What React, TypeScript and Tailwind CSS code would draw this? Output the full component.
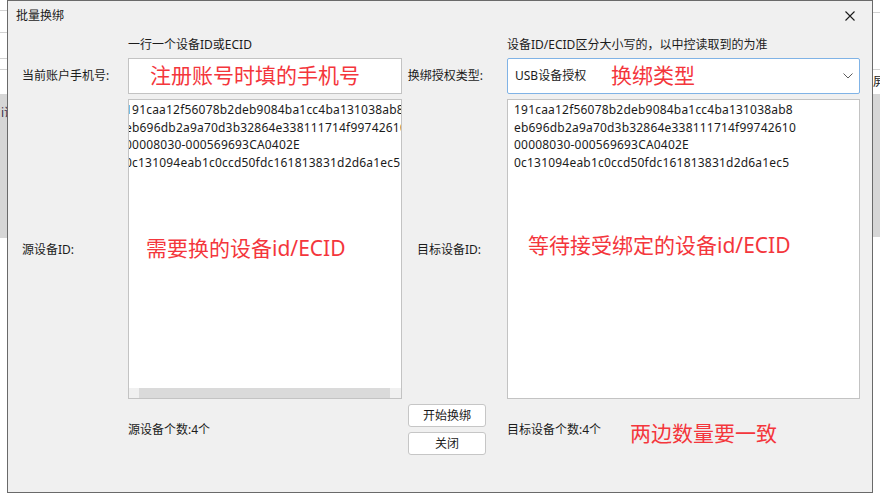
const ids = [
  '191caa12f56078b2deb9084ba1cc4ba131038ab8',
  'eb696db2a9a70d3b32864e338111714f99742610',
  '00008030-000569693CA0402E',
  '0c131094eab1c0ccd50fdc161813831d2d6a1ec5',
];

function IdLines() {
  return (
    <div className="whitespace-nowrap pt-[1px] leading-[17.5px] tracking-[0.2px]">
      {ids.map((id) => (
        <div key={id}>{id}</div>
      ))}
    </div>
  );
}

function LeftBackdrop() {
  return (
    <div className="flex w-[7px] shrink-0 flex-col overflow-hidden bg-white">
      <div className="h-[11px] shrink-0 border-b border-[#d2d2d2]" />
      <div className="h-[22px] shrink-0 border-b border-[#d2d2d2]" />
      <div className="h-[26px] shrink-0 border-b border-[#d2d2d2]" />
      <div className="h-[11px] shrink-0 border-b border-[#d2d2d2]" />
      <div className="h-[24px] shrink-0" />
      <div className="h-[144px] shrink-0 whitespace-nowrap bg-[#d6d6d6] pl-[1px] pt-[11px] leading-[16px] text-[#3a2f4a]">
        i讯
      </div>
    </div>
  );
}

function RightBackdrop() {
  return (
    <div className="flex w-[7px] shrink-0 flex-col overflow-hidden bg-white">
      <div className="h-[13px] shrink-0 border-b border-[#d2d2d2]" />
      <div className="h-[57px] shrink-0 border-b border-[#d2d2d2]" />
      <div className="flex h-[24px] shrink-0 items-center whitespace-nowrap">屏</div>
      <div className="h-[143px] shrink-0 bg-[#d6d6d6]" />
    </div>
  );
}

function Dialog() {
  return (
    <div className="flex h-[493px] w-[866px] shrink-0 flex-col border border-[#6a6a6a] bg-[#f0f0f0]">
      {/* title bar */}
      <div className="flex h-[30px] shrink-0 items-center justify-between pl-[8px] pr-[17px]">
        <span>批量换绑</span>
        <svg width="10" height="10" viewBox="0 0 10 10" className="text-[#1b1b1b]">
          <path d="M0.5 0.5 L9.5 9.5 M9.5 0.5 L0.5 9.5" stroke="currentColor" strokeWidth="1.1" fill="none" />
        </svg>
      </div>

      <div className="flex flex-col pl-[14px]">
        {/* hints */}
        <div className="flex h-[27px] items-center">
          <div className="w-[106px]" />
          <div className="w-[274px]">一行一个设备ID或ECID</div>
          <div className="w-[105px]" />
          <div className="w-[353px]">设备ID/ECID区分大小写的，以中控读取到的为准</div>
        </div>

        {/* phone + type */}
        <div className="flex h-[36px]">
          <div className="flex w-[106px] items-center">当前账户手机号:</div>
          <div className="flex w-[274px] items-center border border-[#c3c3c3] bg-white pl-[21px] text-[21px] text-[#f4363c]">
            注册账号时填的手机号
          </div>
          <div className="flex w-[105px] items-center justify-end pr-[24px]">换绑授权类型:</div>
          <div className="flex w-[353px] items-center rounded-[2px] border border-[#80b3e6] bg-white pl-[7px] pr-[6px]">
            <span className="w-[96px]">USB设备授权</span>
            <span className="text-[21px] text-[#f4363c]">换绑类型</span>
            <svg width="10" height="6" viewBox="0 0 10 6" className="ml-auto text-[#5c5c5c]">
              <path d="M0.5 0.5 L5 5 L9.5 0.5" stroke="currentColor" strokeWidth="1" fill="none" />
            </svg>
          </div>
        </div>

        {/* id lists */}
        <div className="mt-[5px] flex h-[300px]">
          <div className="flex w-[106px] items-center pt-[1px]">源设备ID:</div>
          <div className="relative flex w-[274px] flex-col overflow-hidden border border-[#c3c3c3] bg-white">
            <div className="flex-1 overflow-hidden pl-[6px]">
              <div className="-ml-[10px]">
                <IdLines />
              </div>
            </div>
            <div className="flex h-[10px] shrink-0 bg-[#f0f0f0] pl-[10px] pr-[11px]">
              <div className="flex-1 bg-[#dadada]" />
            </div>
            <div className="absolute left-[17px] top-[138px] whitespace-nowrap text-[21px] leading-[21px] text-[#f4363c]">
              需要换的设备id/ECID
            </div>
          </div>
          <div className="flex w-[105px] items-center justify-end pr-[26px] pt-[2px]">目标设备ID:</div>
          <div className="relative w-[353px] overflow-hidden border border-[#c3c3c3] bg-white pl-[6px]">
            <IdLines />
            <div className="absolute left-[20px] top-[135px] whitespace-nowrap text-[21px] leading-[21px] text-[#f4363c]">
              等待接受绑定的设备id/ECID
            </div>
          </div>
        </div>

        {/* counts + actions */}
        <div className="flex pt-[5px]">
          <div className="w-[106px]" />
          <div className="flex w-[274px] items-center">源设备个数:4个</div>
          <div className="flex w-[105px] flex-col gap-[5px] pl-[6px]">
            <button className="h-[23px] w-[78px] rounded-[3px] border border-[#c6c6c6] bg-white">开始换绑</button>
            <button className="h-[23px] w-[78px] rounded-[3px] border border-[#c6c6c6] bg-white">关闭</button>
          </div>
          <div className="flex w-[353px] items-center">
            <span className="w-[123px]">目标设备个数:4个</span>
            <span className="mt-[8px] text-[21px] text-[#f4363c]">两边数量要一致</span>
          </div>
        </div>
      </div>
    </div>
  );
}

export default function App() {
  return (
    <div className="flex h-[500px] w-[880px] items-start overflow-hidden bg-white font-['Noto_Sans','Noto_Sans_CJK_SC',sans-serif] text-[12px] text-[#1b1b1b]">
      <LeftBackdrop />
      <Dialog />
      <RightBackdrop />
    </div>
  );
}
